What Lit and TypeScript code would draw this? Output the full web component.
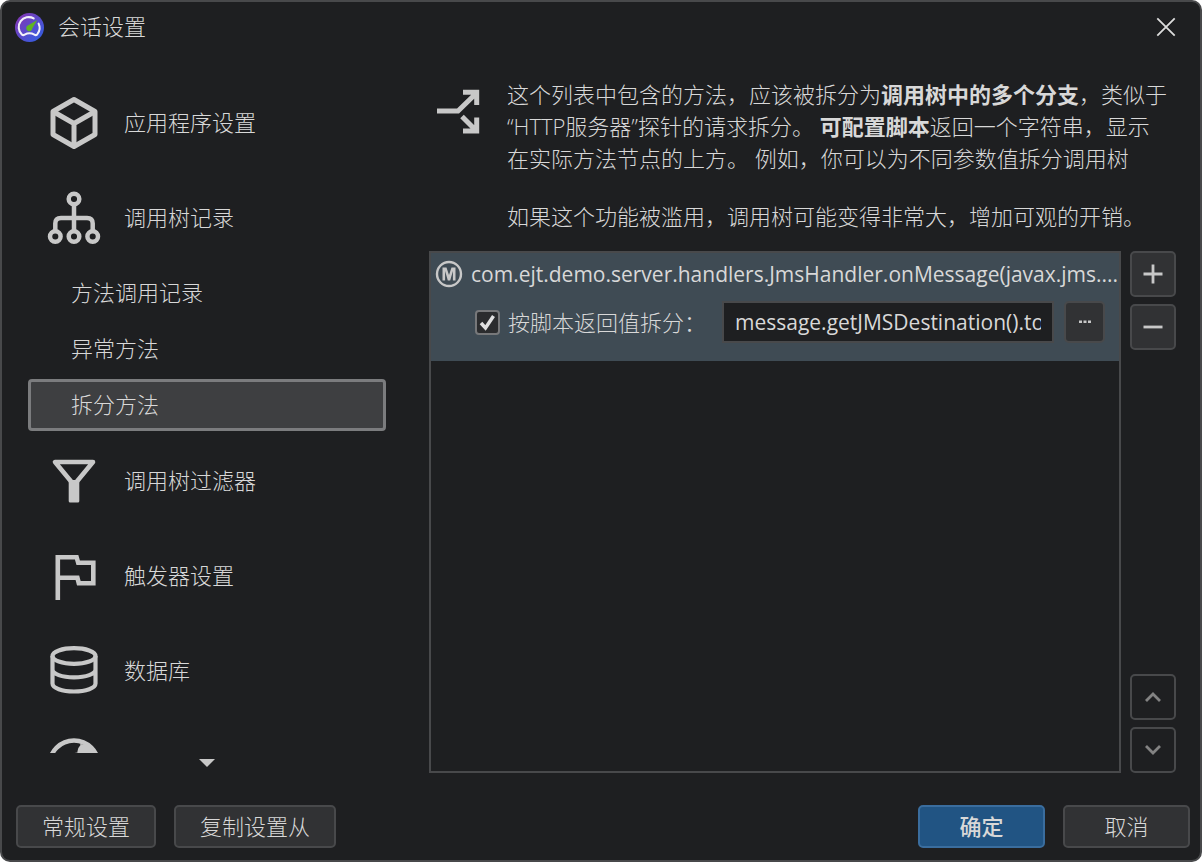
import { LitElement, html, css, svg } from "lit";
import { customElement, property, state } from "lit/decorators.js";

const glyphs: Record<string, unknown> = {
  cube: svg`<g fill="none" stroke="#c8c8c8" stroke-width="5" stroke-linejoin="round"><path d="M30 6.500 51 18.500V41.500L30 53.500 9 41.500V18.500Z"/><path d="M9 18.500 30 30.500 51 18.500M30 30.500V53"/></g>`,
  tree: svg`<g fill="none" stroke="#c8c8c8" stroke-width="4.500"><circle cx="30" cy="11" r="5.300"/><circle cx="11.300" cy="48.500" r="5.300"/><circle cx="30" cy="48.500" r="5.300"/><circle cx="48.700" cy="48.500" r="5.300"/><path d="M30 16V43M11.300 43V35.500Q11.300 30 17 30H43Q48.700 30 48.700 35.500V43"/></g>`,
  funnel: svg`<path d="M11 11H49L30 34Z" fill="none" stroke="#c8c8c8" stroke-width="4.600" stroke-linejoin="round"/><path d="M24.700 29H35.300V50Q35.300 51.500 33.800 51.500H26.200Q24.700 51.500 24.700 50Z" fill="#c8c8c8"/>`,
  flag: svg`<path d="M13.800 54V11.200H32.600L34.200 16.800H49.300V37.200H34.800L33.400 31.800H14" fill="none" stroke="#c8c8c8" stroke-width="4.600"/>`,
  db: svg`<g fill="none" stroke="#c8c8c8" stroke-width="4.200"><ellipse cx="30" cy="15" rx="21.500" ry="7.900"/><path d="M8.500 15V42.500C8.500 47 18 50.500 30 50.500S51.500 47 51.500 42.500V15M8.500 28.500C8.500 33 18 36.400 30 36.400S51.500 33 51.500 28.500"/></g>`,
  gauge: svg`<circle cx="30" cy="29" r="24.500" fill="none" stroke="#c8c8c8" stroke-width="4.500"/><path d="M36 8 46 9 56 22H26Q27 17 33.500 16.500Q33 12.500 36.500 9Z" fill="#c8c8c8"/>`,
};

@customElement("nav-entry")
class NavEntry extends LitElement {
  @property() icon = "";
  @property() label = "";
  @property({ type: Boolean }) selected = false;
  static styles = css`
    :host { display: block; flex: none; }
    button {
      display: flex; align-items: center; width: 100%; box-sizing: border-box;
      font: inherit; color: inherit; text-align: left; cursor: pointer;
      background: none; border: 3px solid transparent; border-radius: 4px; padding: 0;
    }
    .group { height: 95px; padding-left: 13px; gap: 20px; }
    .sub { height: 52px; margin: 2px 0; padding-left: 40px; }
    .on { background: #3e3f41; border-color: #7b7c7e; }
    svg { width: 60px; height: 60px; flex: none; }
    span { padding-bottom: 2px; }
  `;
  render() {
    return this.icon
      ? html`<button class="group"><svg viewBox="0 0 60 60" aria-hidden="true">${glyphs[this.icon]}</svg><span>${this.label}</span></button>`
      : html`<button class="sub ${this.selected ? "on" : ""}" aria-current=${this.selected}><span>${this.label}</span></button>`;
  }
}

@customElement("app-root")
class AppRoot extends LitElement {
  @state() private current = "拆分方法";
  private entries = [
    { icon: "cube", label: "应用程序设置" },
    { icon: "tree", label: "调用树记录" },
    { icon: "", label: "方法调用记录" },
    { icon: "", label: "异常方法" },
    { icon: "", label: "拆分方法" },
    { icon: "funnel", label: "调用树过滤器" },
    { icon: "flag", label: "触发器设置" },
    { icon: "db", label: "数据库" },
    { icon: "gauge", label: "" },
  ];

  static styles = css`
    :host {
      display: block; background: #fff; color: #d8d8d8;
      font: 300 22px/32px "Open Sans", "Noto Sans CJK SC", sans-serif;
    }
    * { box-sizing: border-box; }
    button, input { font: inherit; color: inherit; }
    .window {
      display: flex; flex-direction: column; height: 100vh;
      background: #1e1f21; border: 2px solid #48494b; border-radius: 10px; overflow: hidden;
    }
    .titlebar { display: flex; align-items: center; gap: 14px; height: 50px; padding: 0 24px 0 13px; flex: none; }
    .titlebar h1 { font: inherit; margin: 0; flex: 1; padding-bottom: 2px; }
    .titlebar svg { display: block; }
    .close { background: none; border: 0; padding: 0; }
    .body { flex: 1; min-height: 0; display: flex; gap: 43px; padding: 23px 24px 0 26px; }
    .side { width: 358px; flex: none; display: flex; flex-direction: column; }
    nav { flex: 1; min-height: 0; display: flex; flex-direction: column; overflow: hidden; }
    .more { height: 20px; background: none; border: 0; padding: 0; display: grid; place-items: center; }
    .main { flex: 1; min-width: 0; display: flex; flex-direction: column; }
    .intro { display: flex; gap: 22px; padding: 3px 0 19px 0; }
    .intro svg { width: 56px; height: 64px; flex: none; }
    .intro p { margin: 0 0 26px; }
    .intro p:last-child { margin: 0; }
    b { font-weight: 700; }
    .content { flex: 1; min-height: 0; display: flex; gap: 9px; }
    .list { flex: 1; min-width: 0; border: 2px solid #48494b; }
    .item { background: #3f4b54; padding: 4px 0 18px 4px; }
    .method { display: flex; align-items: center; gap: 8px; height: 34px; font-size: 21px; font-weight: 400; }
    .method span { flex: 1; overflow: hidden; text-overflow: ellipsis; white-space: nowrap; }
    .method svg { flex: none; }
    .script { display: flex; align-items: center; height: 42px; margin: 10px 14px 0 40px; }
    .check { display: flex; align-items: center; gap: 8px; flex: 1; white-space: nowrap; }
    .check input {
      appearance: none; width: 25px; height: 25px; margin: 0; flex: none; border: 2px solid #77787a; border-radius: 4px;
      background: #2b2c2e;
    }
    .check input:checked {
      background: #2b2c2e url('data:image/svg+xml,<svg xmlns="http://www.w3.org/2000/svg" viewBox="0 0 21 21"><path d="M4 11 8.500 16 16.500 4" fill="none" stroke="%23e0e0e0" stroke-width="3.500"/></svg>') center / 21px 21px;
    }
    .field { width: 332px; height: 42px; border: 2px solid #48494b; background: #1e1f21; padding: 0 11px; margin-right: 10px; border-radius: 0; outline: 0; font-size: 21px; font-weight: 400; }
    .btn { background: #313234; border: 2px solid #48494b; border-radius: 5px; padding: 0; display: grid; place-items: center; }
    .dots { width: 41px; height: 42px; flex: none; }
    .tools { width: 46px; flex: none; display: flex; flex-direction: column; gap: 7px; }
    .tools .btn { height: 46px; flex: none; }
    .tools .btn:disabled { background: none; }
    .spacer { flex: 1; }
    .footer { display: flex; gap: 18px; padding: 32px 10px 12px 14px; flex: none; }
    .footer .btn { height: 43px; padding: 0 24px 2px; }
    .footer .fixed { width: 127px; padding: 0 0 2px; }
    .footer .ok { background: #215483; border-color: #3a6d9e; font-weight: 500; }
  `;

  render() {
    return html`
      <div class="window">
        <header class="titlebar">
          <svg width="29" height="29" viewBox="0 0 28 28" aria-hidden="true">
            <defs><linearGradient id="lg" x1="0" y1="0" x2="1" y2="1"><stop offset="0" stop-color="#8b32b0"/><stop offset="1" stop-color="#2a62e6"/></linearGradient></defs>
            <circle cx="14" cy="14" r="14" fill="url(#lg)"/>
            <path d="M18 5.200A9.700 9.700 0 0 0 6.600 20.700Q8 22 9.300 20.800Q14 18.300 18.700 20.800Q20 22 21.400 20.700A9.700 9.700 0 0 0 22.800 10.300" fill="none" stroke="#f2f0fa" stroke-width="2" stroke-linecap="round"/>
            <path d="M21.500 6.800 16.800 14.800A3 3 0 1 1 12.300 12Z" fill="#5fb422"/>
          </svg>
          <h1>会话设置</h1>
          <button class="close" aria-label="关闭"><svg width="20" height="20" viewBox="0 0 20 20"><path d="M1.300 1.300 18.700 18.700M18.700 1.300 1.300 18.700" stroke="#dcdcdc" stroke-width="1.800"/></svg></button>
        </header>
        <div class="body">
          <div class="side">
            <nav>
              ${this.entries.map((e) => html`<nav-entry .icon=${e.icon} .label=${e.label} .selected=${e.label === this.current}></nav-entry>`)}
            </nav>
            <button class="more" aria-label="更多"><svg width="16" height="8" viewBox="0 0 16 8"><path d="M0 0H16L8 8Z" fill="#c8c8c8"/></svg></button>
          </div>
          <main class="main">
            <div class="intro">
              <svg viewBox="0 0 56 64" aria-hidden="true"><g fill="none" stroke="#c8c8c8" stroke-width="5"><path d="M8 33H29L47 15.500M34 14.300H47.700V27M33 38.500 47 52.500M34 53H47.700V39.500"/></g></svg>
              <div>
                <p>这个列表中包含的方法，应该被拆分为<b>调用树中的多个分支</b>，类似于<br>“HTTP服务器”探针的请求拆分。 <b>可配置脚本</b>返回一个字符串，显示<br>在实际方法节点的上方。 例如，你可以为不同参数值拆分调用树</p>
                <p>如果这个功能被滥用，调用树可能变得非常大，增加可观的开销。</p>
              </div>
            </div>
            <div class="content">
              <div class="list">
                <div class="item">
                  <div class="method">
                    <svg width="28" height="28" viewBox="0 0 28 28" aria-hidden="true"><circle cx="14" cy="14" r="12" fill="none" stroke="#c8c8c8" stroke-width="2.400"/><path d="M7.500 20.500V7.500H11.500L14 15 16.500 7.500H20.500V20.500H17.900V11L15.200 20.500H12.800L10.100 11V20.500Z" fill="#c8c8c8"/></svg>
                    <span>com.ejt.demo.server.handlers.JmsHandler.onMessage(javax.jms....</span>
                  </div>
                  <div class="script">
                    <label class="check"><input type="checkbox" checked />按脚本返回值拆分：</label>
                    <input class="field" aria-label="脚本" value="message.getJMSDestination().toString()" />
                    <button class="btn dots" aria-label="编辑脚本"><svg width="12" height="4" viewBox="0 0 12 4"><path d="M0 .5H3V3H0ZM4.500 .5H7.500V3H4.500ZM9 .5H12V3H9Z" fill="#c8c8c8"/></svg></button>
                  </div>
                </div>
              </div>
              <div class="tools">
                <button class="btn" aria-label="添加"><svg width="20" height="20" viewBox="0 0 20 20"><path d="M10 .5V19.500M.5 10H19.500" stroke="#c8c8c8" stroke-width="2.800"/></svg></button>
                <button class="btn" aria-label="删除"><svg width="20" height="20" viewBox="0 0 20 20"><path d="M.5 10H19.500" stroke="#c8c8c8" stroke-width="2.800"/></svg></button>
                <div class="spacer"></div>
                <button class="btn" disabled aria-label="上移"><svg width="18" height="12" viewBox="0 0 18 12"><path d="M2 10 9 3 16 10" fill="none" stroke="#838383" stroke-width="2.800"/></svg></button>
                <button class="btn" disabled aria-label="下移"><svg width="18" height="12" viewBox="0 0 18 12"><path d="M2 2 9 9 16 2" fill="none" stroke="#838383" stroke-width="2.800"/></svg></button>
              </div>
            </div>
          </main>
        </div>
        <footer class="footer">
          <button class="btn">常规设置</button>
          <button class="btn">复制设置从</button>
          <div class="spacer"></div>
          <button class="btn fixed ok">确定</button>
          <button class="btn fixed">取消</button>
        </footer>
      </div>
    `;
  }
}
